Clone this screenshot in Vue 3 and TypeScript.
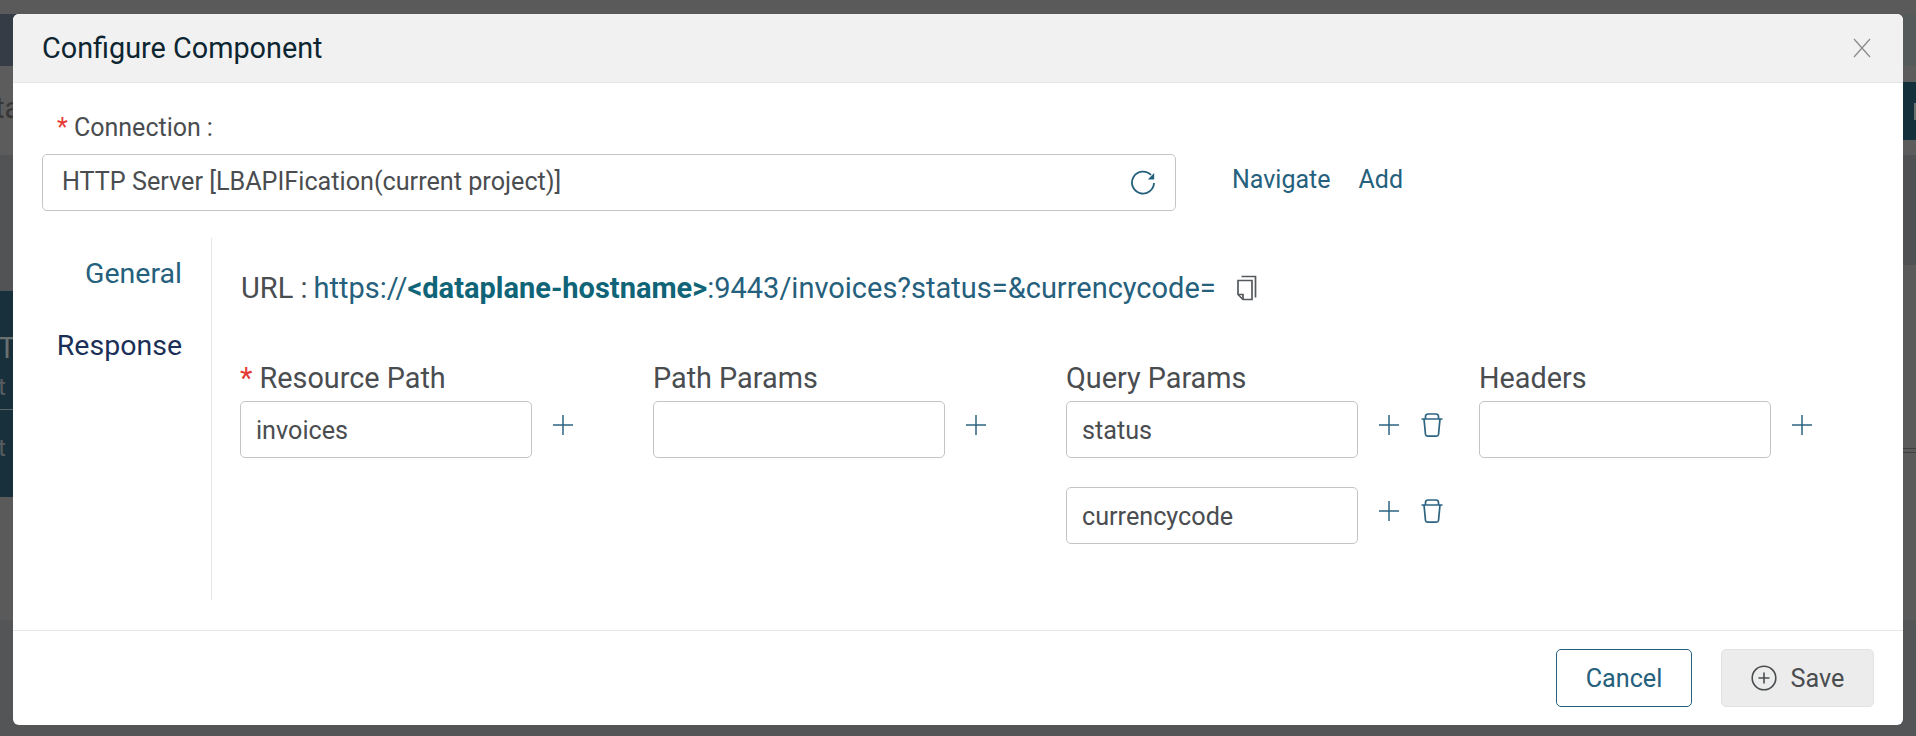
<script setup lang="ts">
type ParamRow = { value: string; removable: boolean };
type ParamColumn = { label: string; required?: boolean; rows: ParamRow[] };

const columns: ParamColumn[] = [
  { label: 'Resource Path', required: true, rows: [{ value: 'invoices', removable: false }] },
  { label: 'Path Params', rows: [{ value: '', removable: false }] },
  {
    label: 'Query Params',
    rows: [
      { value: 'status', removable: true },
      { value: 'currencycode', removable: true },
    ],
  },
  { label: 'Headers', rows: [{ value: '', removable: false }] },
];
</script>

<template>
  <div class="page">
    <div class="backdrop-left">
      <div class="bl-a"></div>
      <div class="bl-b"><span>ta</span></div>
      <div class="bl-c"></div>
      <div class="bl-d">
        <span class="big">T</span>
        <span class="small s1">t</span>
        <span class="small s2">t</span>
      </div>
    </div>
    <div class="backdrop-right">
      <div class="br-a"></div>
      <div class="br-b"></div>
      <div class="br-c"><i></i></div>
      <div class="br-d"></div>
      <div class="br-e"></div>
      <div class="br-f"></div>
    </div>

    <section class="modal">
      <header class="modal-head">
        <h2>Configure Component</h2>
        <svg class="close" width="18" height="20" viewBox="0 0 18 20">
          <path d="M1 1 17 19M17 1 1 19" stroke="#8c8c8c" stroke-width="1.3" fill="none" />
        </svg>
      </header>

      <div class="modal-body">
        <label class="conn-label"><span class="req">*</span> Connection<span class="colon">:</span></label>
        <div class="conn-row">
          <div class="select">
            <span>HTTP Server [LBAPIFication(current project)]</span>
            <svg width="26" height="26" viewBox="0 0 26 26" fill="none">
              <path d="M21 6A11 11 0 1 0 24 14" stroke="#25607c" stroke-width="1.8" />
              <path d="M24.200 4v6.400h-6.400z" fill="#25607c" />
            </svg>
          </div>
          <a class="link link--first">Navigate</a>
          <a class="link">Add</a>
        </div>

        <div class="tabs-wrap">
          <nav class="tabs">
            <a class="tab">General</a>
            <a class="tab tab--active">Response</a>
          </nav>
          <div class="pane">
            <div class="url">
              <span>URL :</span>
              <span class="url-value">https://<b>&lt;dataplane-hostname&gt;</b>:9443/invoices?status=&amp;currencycode=</span>
              <svg class="copy" width="20" height="26" viewBox="0 0 20 26" fill="none" stroke="#55595d" stroke-width="1.7">
                <path d="M4.500 1.500h14v21" />
                <path d="M1 5.500h14v19H6l-5-5z" />
                <path d="M1.500 19.500H6v5" />
              </svg>
            </div>

            <div class="params">
              <div v-for="col in columns" :key="col.label" class="col">
                <div class="col-label"><span v-if="col.required" class="req">*</span> {{ col.label }}</div>
                <div v-for="row in col.rows" :key="row.value" class="row">
                  <div class="input">{{ row.value }}</div>
                  <svg class="plus" width="20" height="20" viewBox="0 0 20 20">
                    <path d="M10 0v20M0 10h20" stroke="#2b6480" stroke-width="1.5" />
                  </svg>
                  <svg v-if="row.removable" class="trash" width="22" height="24" viewBox="0 0 22 24" fill="none" stroke="#2b6480" stroke-width="1.7">
                    <path d="M.5 6h21M4.500 6V3.500C4.500 2 5.500 1 7 1h8c1.500 0 2.500 1 2.500 2.500V6" />
                    <path d="M3 6l1.500 15.500c.1 1 .8 1.600 2 1.600h9c1.200 0 1.900-.6 2-1.600L19 6" />
                  </svg>
                </div>
              </div>
            </div>
          </div>
        </div>
      </div>

      <footer class="modal-foot">
        <button class="btn btn--cancel">Cancel</button>
        <button class="btn btn--save">
          <svg width="26" height="26" viewBox="0 0 26 26" fill="none" stroke="#4a4d50" stroke-width="1.6">
            <circle cx="13" cy="13" r="11.800" />
            <path d="M13 7.500v11M7.500 13h11" />
          </svg>
          Save
        </button>
      </footer>
    </section>
  </div>
</template>

<style>
html,
body {
  margin: 0;
  background: #5a5a5a;
}
</style>

<style scoped>
.page {
  position: relative;
  height: 736px;
  width: 1916px;
  overflow: hidden;
  box-sizing: border-box;
  padding: 14px 13px 11px;
  background: linear-gradient(#5a5a5a 0, #5a5a5a 620px, #545556 620px);
  font-family: Roboto, "Liberation Sans", sans-serif;
  color: #4a4d50;
}

.backdrop-left {
  position: absolute;
  left: 0;
  top: 14px;
  width: 30px;
}

.bl-a {
  height: 52px;
  background: #363c45;
}

.bl-b {
  height: 89px;
  background: #5c5c5c;
  color: #363636;
  font-size: 29px;
  line-height: 84px;
  white-space: nowrap;
  text-indent: -5px;
}

.bl-c {
  height: 136px;
  background: #525354;
}

.bl-d {
  position: relative;
  height: 206px;
  background: #17303c;
  color: #6a6f70;
}

.bl-d::after {
  content: "";
  position: absolute;
  left: 0;
  right: 0;
  top: 118px;
  height: 1px;
  background: #5c6568;
}

.big,
.small {
  position: absolute;
  left: -2px;
  line-height: 1;
}

.big {
  top: 42px;
  font-size: 30px;
}

.small {
  font-size: 24px;
  color: #575c5e;
}

.s1 {
  top: 84px;
}

.s2 {
  top: 145px;
}

.backdrop-right {
  position: absolute;
  right: 0;
  top: 14px;
  width: 13px;
}

.br-a {
  height: 52px;
  background: #545a5a;
}

.br-b {
  height: 16px;
  background: #5c5c5c;
}

.br-c {
  position: relative;
  height: 58px;
  background: #13303b;
}

.br-c i {
  position: absolute;
  right: 0;
  top: 21px;
  width: 2px;
  height: 17px;
  background: #6a6f70;
}

.br-d {
  height: 15px;
  background: #5c5c5c;
}

.br-e {
  height: 110px;
  background: #4f5152;
}

.br-f {
  margin-top: 183px;
  height: 3px;
  border-top: 1px solid #404040;
  border-bottom: 1px solid #404040;
}

.modal {
  position: relative;
  height: 711px;
  display: flex;
  flex-direction: column;
  background: #fff;
  border-radius: 6px;
  overflow: hidden;
}

.modal-head {
  flex: none;
  height: 69px;
  box-sizing: border-box;
  display: flex;
  align-items: center;
  justify-content: space-between;
  padding: 0 32px 0 29px;
  background: #f1f1f1;
  border-bottom: 1px solid #e4e4e4;
}

h2 {
  margin: 0;
  font-size: 28.800px;
  font-weight: 400;
  color: #0d2530;
}

.modal-body {
  flex: 1;
  min-height: 0;
  padding: 30px 29px 0;
}

.conn-label {
  display: block;
  margin-left: 15px;
  font-size: 25px;
  line-height: 30px;
}

.colon {
  margin-left: 6px;
}

.req {
  color: #e53935;
}

.conn-row {
  margin-top: 11px;
  display: flex;
  align-items: center;
}

.select {
  width: 1134px;
  height: 57px;
  box-sizing: border-box;
  display: flex;
  align-items: center;
  justify-content: space-between;
  padding: 0 19px 2px 19px;
  border: 1px solid #c4c4c4;
  border-radius: 5px;
  font-size: 25.200px;
}

.link {
  color: #25607c;
  font-size: 25px;
  margin-left: 28px;
  margin-bottom: 7px;
}

.link--first {
  margin-left: 56px;
}

.tabs-wrap {
  display: flex;
  margin-top: 27px;
}

.tabs {
  flex: none;
  width: 170px;
  box-sizing: border-box;
  height: 362px;
  padding: 19px 29px 0 0;
  text-align: right;
  border-right: 1px solid #e6e6e6;
  display: flex;
  flex-direction: column;
  gap: 39px;
  font-size: 28.500px;
}

.tab {
  color: #25607c;
  line-height: 33px;
}

.tab--active {
  color: #1c2f57;
}

.pane {
  flex: 1;
  min-width: 0;
  padding: 32px 0 0 29px;
}

.url {
  display: flex;
  align-items: center;
  font-size: 29px;
  height: 36px;
  white-space: nowrap;
}

.url-value {
  margin-left: 6px;
  color: #25607c;
}

.url-value b {
  font-weight: 700;
  color: #0f6478;
}

.copy {
  margin-left: 21px;
}

.params {
  margin: 57px 0 0 -1px;
  display: flex;
}

.col {
  flex: none;
  width: 413px;
}

.col-label {
  font-size: 28.800px;
  line-height: 30px;
  margin-bottom: 8px;
}

.row {
  display: flex;
  height: 57px;
  margin-bottom: 29px;
}

.input {
  flex: none;
  width: 292px;
  height: 57px;
  box-sizing: border-box;
  padding-left: 15px;
  border: 1px solid #c4c4c4;
  border-radius: 5px;
  font-size: 25.200px;
  line-height: 57px;
}

.plus {
  flex: none;
  margin: 14px 0 0 21px;
}

.trash {
  flex: none;
  margin: 12px 0 0 22px;
}

.modal-foot {
  flex: none;
  height: 95px;
  box-sizing: border-box;
  border-top: 1px solid #e6e6e6;
  display: flex;
  justify-content: flex-end;
  align-items: flex-start;
  gap: 29px;
  padding: 18px 29px 0 0;
}

.btn {
  height: 58px;
  box-sizing: border-box;
  border-radius: 5px;
  font-family: inherit;
  font-size: 25.200px;
}

.btn--cancel {
  width: 136px;
  background: #fff;
  border: 1px solid #25607c;
  color: #25607c;
}

.btn--save {
  width: 153px;
  display: flex;
  align-items: center;
  justify-content: center;
  gap: 14px;
  background: #ececec;
  border: 1px solid #e2e2e2;
  color: #4a4d50;
}
</style>
